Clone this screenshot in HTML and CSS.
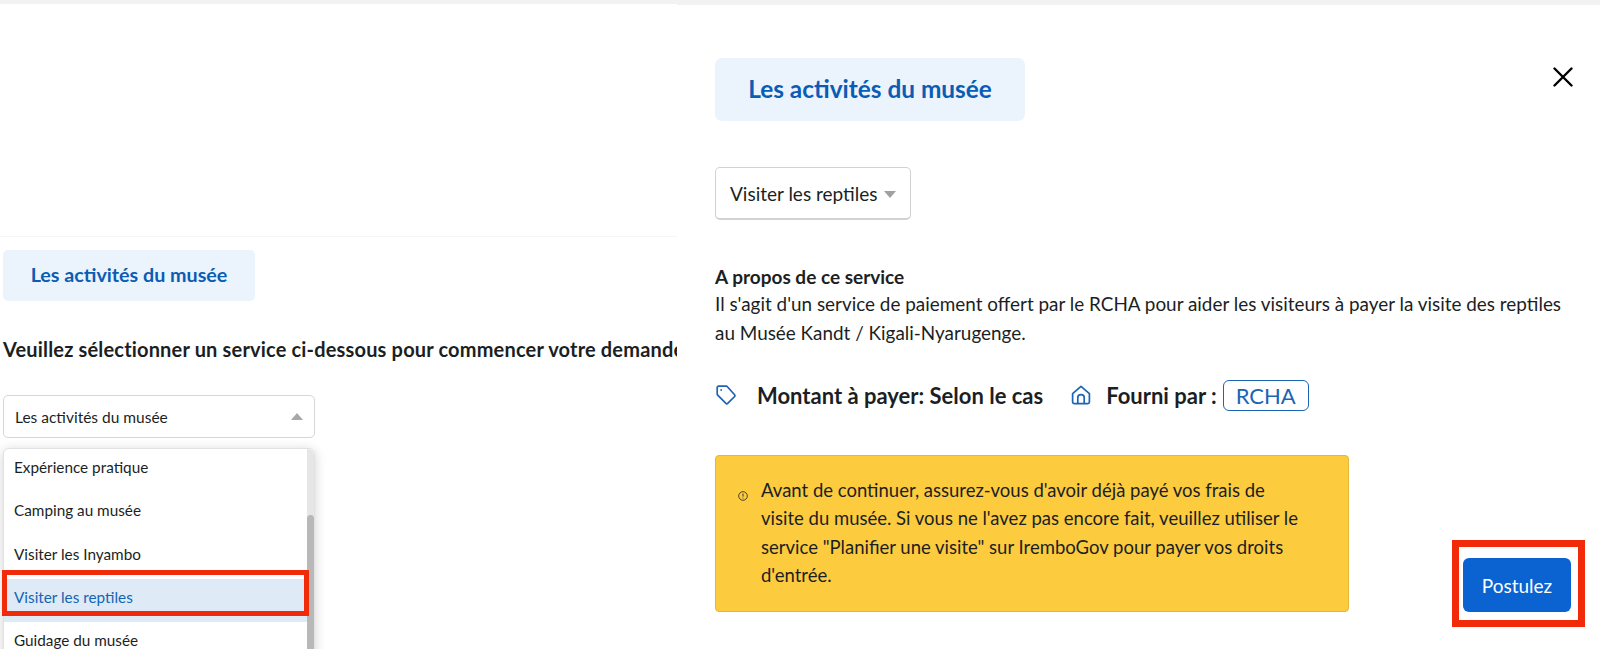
FILE: index.html
```html
<!DOCTYPE html>
<html lang="fr">
<head>
    <meta charset="UTF-8">
    <title>Les activités du musée</title>
    <link rel="stylesheet" href="styles.css">
</head>
<body>
    <div class="page">
        <div class="left-panel">
            <div class="top-strip"></div>
            <div class="blank-head"></div>
            <div class="left-body">
                <div class="badge">Les activités du musée</div>
                <div class="prompt">Veuillez sélectionner un service ci-dessous pour commencer votre demande</div>
                <div class="select-open">
                    <span>Les activités du musée</span>
                    <span class="caret-up"></span>
                </div>
                <div class="menu">
                    <div class="menu-list">
                        <div class="menu-item">Expérience pratique</div>
                        <div class="menu-item">Camping au musée</div>
                        <div class="menu-item">Visiter les Inyambo</div>
                        <div class="menu-item selected">Visiter les reptiles</div>
                        <div class="menu-item">Guidage du musée</div>
                    </div>
                    <div class="scrollbar"><div class="scroll-thumb"></div></div>
                </div>
            </div>
            <div class="mark mark-option"></div>
        </div>

        <div class="right-panel">
            <div class="top-strip right-strip"></div>
            <div class="right-body">
                <div class="modal-head">
                    <div class="badge badge-large">Les activités du musée</div>
                    <svg class="close-icon" viewBox="0 0 20 20" width="20" height="20">
                        <path d="M1.5 1.5L18.5 18.5M18.5 1.5L1.5 18.5" fill="none" stroke="#000" stroke-width="2.4" stroke-linecap="round"/>
                    </svg>
                </div>
                <div class="select-closed">
                    <span>Visiter les reptiles</span>
                    <span class="caret-down"></span>
                </div>
                <div class="about-title">A propos de ce service</div>
                <p class="about-text">Il s'agit d'un service de paiement offert par le RCHA pour aider les visiteurs à payer la visite des reptiles<br>au Musée Kandt / Kigali-Nyarugenge.</p>
                <div class="facts">
                    <svg class="tag-icon" viewBox="0 0 20 20" width="20" height="20">
                        <path d="M1.2 2.6C1.2 1.8 1.8 1.2 2.6 1.2H10.2C10.7 1.2 11.1 1.4 11.4 1.8L18.6 9.8C19 10.3 19 11 18.6 11.5L11.7 18.4C11.2 18.9 10.4 18.9 9.9 18.4L1.7 10.2C1.4 9.9 1.2 9.5 1.2 9.1Z" fill="none" stroke="#1c64b4" stroke-width="1.7" stroke-linejoin="round"/>
                        <circle cx="5.2" cy="5" r="0.9" fill="#1c64b4"/>
                    </svg>
                    <span class="fact-label">Montant à payer: Selon le cas</span>
                    <svg class="home-icon" viewBox="0 0 20 20" width="20" height="20">
                        <path d="M1.6 8.6L10 1.4L18.4 8.6V17C18.4 18 17.8 18.6 16.8 18.6H3.2C2.2 18.6 1.6 18 1.6 17Z" fill="none" stroke="#1c64b4" stroke-width="1.7" stroke-linejoin="round"/>
                        <path d="M6.8 18.6V12.4C6.8 10.6 8.2 9.6 10 9.6C11.8 9.6 13.2 10.6 13.2 12.4V18.6" fill="none" stroke="#1c64b4" stroke-width="1.7"/>
                    </svg>
                    <span class="fact-label">Fourni par :</span>
                    <span class="pill">RCHA</span>
                </div>
                <div class="bottom-row">
                    <div class="alert">
                        <svg class="info-icon" viewBox="0 0 10 10" width="10" height="10">
                            <circle cx="5" cy="5" r="4.3" fill="none" stroke="#3a3320" stroke-width="0.9"/>
                            <path d="M5 2.6V5.6M5 6.7V7.5" stroke="#3a3320" stroke-width="1"/>
                        </svg>
                        <div class="alert-text">Avant de continuer, assurez-vous d'avoir déjà payé vos frais de<br>visite du musée. Si vous ne l'avez pas encore fait, veuillez utiliser le<br>service "Planifier une visite" sur IremboGov pour payer vos droits<br>d'entrée.</div>
                    </div>
                    <button class="apply-button">Postulez</button>
                </div>
            </div>
            <div class="mark mark-button"></div>
        </div>
    </div>
</body>
</html>
```

FILE: styles.css
```css
html, body {
    margin: 0;
    height: 649px;
    overflow: hidden;
    background-color: white;
}

body {
    font-family: Lato, 'Noto Sans', sans-serif;
    color: #1b1f24;
}

.page {
    display: flex;
    height: 649px;
}

.left-panel {
    position: relative;
    width: 677px;
    flex-shrink: 0;
    overflow: hidden;
}

.right-panel {
    position: relative;
    flex: 1;
}

.top-strip {
    height: 4px;
    background-color: #f2f2f2;
}

.right-strip {
    height: 5px;
}

.blank-head {
    height: 232px;
    border-bottom: 1px solid #f6f6f6;
}

.left-body {
    padding: 13px 0 0 3px;
}

.badge {
    width: 252px;
    height: 51px;
    line-height: 50px;
    text-align: center;
    box-sizing: border-box;
    background-color: #ebf3fc;
    border-radius: 5px;
    color: #0b5cb5;
    font-size: 19.7px;
    font-weight: 700;
}

.prompt {
    margin-top: 35px;
    line-height: 26px;
    font-size: 20px;
    letter-spacing: 0.17px;
    font-weight: 700;
    white-space: nowrap;
}

.select-open {
    width: 312px;
    height: 43px;
    margin-top: 33px;
    padding: 0 11px;
    box-sizing: border-box;
    display: flex;
    justify-content: space-between;
    align-items: center;
    border: 1px solid #d6d6d6;
    border-radius: 5px;
    font-size: 15.5px;
}

.caret-up {
    width: 0;
    height: 0;
    border-left: 6px solid transparent;
    border-right: 6px solid transparent;
    border-bottom: 7px solid #a8a8a8;
}

.caret-down {
    width: 0;
    height: 0;
    margin-top: 3px;
    border-left: 6.5px solid transparent;
    border-right: 6.5px solid transparent;
    border-top: 7px solid #a0a0a0;
}

.menu {
    width: 312px;
    height: 220px;
    margin-top: 10px;
    display: flex;
    border: 1px solid #e2e2e2;
    border-radius: 6px 6px 0 0;
    box-sizing: border-box;
    box-shadow: 0 2px 12px rgba(0,0,0,0.18);
    background-color: white;
}

.menu-list {
    flex: 1;
}

.menu-item {
    height: 43.3px;
    box-sizing: border-box;
    padding: 10px 0 0 10px;
    line-height: 16px;
    font-size: 15.3px;
}

.menu-item.selected {
    background-color: #dfeaf7;
    color: #1464b4;
}

.scrollbar {
    width: 7px;
    background-color: #e6e6e6;
    border-radius: 0 6px 0 0;
    padding-top: 66px;
}

.scroll-thumb {
    height: 200px;
    background-color: #b8b8b8;
    border-radius: 4px 4px 0 0;
}

.mark {
    position: absolute;
    box-sizing: border-box;
    border-style: solid;
    border-color: #f12b0a;
}

.mark-option {
    left: 2px;
    top: 570px;
    width: 307px;
    height: 46px;
    border-width: 5px;
}

.mark-button {
    left: 775px;
    top: 540px;
    width: 133px;
    height: 87px;
    border-width: 7px;
}

.right-body {
    padding: 53px 27px 0 38px;
}

.modal-head {
    display: flex;
    justify-content: space-between;
    align-items: flex-start;
}

.badge-large {
    width: 310px;
    height: 63px;
    line-height: 61px;
    border-radius: 7px;
    font-size: 24.4px;
}

.close-icon {
    margin-top: 9px;
}

.select-closed {
    width: 196px;
    height: 53px;
    margin-top: 46px;
    padding: 0 14px;
    box-sizing: border-box;
    display: flex;
    align-items: center;
    justify-content: space-between;
    border: 1px solid #d2d2d2;
    border-bottom-width: 2px;
    border-radius: 5px;
    font-size: 19px;
}

.about-title {
    margin-top: 45px;
    line-height: 24px;
    font-size: 19px;
    font-weight: 700;
}

.about-text {
    margin: 0;
    line-height: 29px;
    font-size: 18.9px;
    white-space: nowrap;
}

.facts {
    display: flex;
    align-items: center;
    margin-top: 32px;
    height: 32px;
}

.tag-icon {
    margin-left: 1px;
}

.fact-label {
    font-size: 22px;
    font-weight: 700;
    white-space: nowrap;
}

.tag-icon + .fact-label {
    margin-left: 21px;
}

.home-icon {
    margin-left: 28px;
    margin-right: 15px;
}

.pill {
    margin-left: 6px;
    padding: 0 12px;
    height: 31px;
    line-height: 29px;
    box-sizing: border-box;
    border: 1px solid #1c64b4;
    border-radius: 6px;
    color: #1c64b4;
    font-size: 22px;
}

.bottom-row {
    display: flex;
    align-items: flex-end;
    margin-top: 44px;
}

.alert {
    width: 634px;
    height: 157px;
    padding: 20px 0 0 22px;
    box-sizing: border-box;
    display: flex;
    background-color: #fdcb3e;
    border: 1px solid #e6b53a;
    border-radius: 4px;
}

.info-icon {
    margin-top: 15px;
    flex-shrink: 0;
}

.alert-text {
    margin-left: 13px;
    line-height: 28.3px;
    font-size: 18.5px;
    white-space: nowrap;
}

.apply-button {
    width: 108px;
    height: 54px;
    margin-left: 114px;
    border: none;
    border-radius: 6px;
    background-color: #0a63d1;
    color: white;
    font-family: inherit;
    font-size: 19px;
}
```
